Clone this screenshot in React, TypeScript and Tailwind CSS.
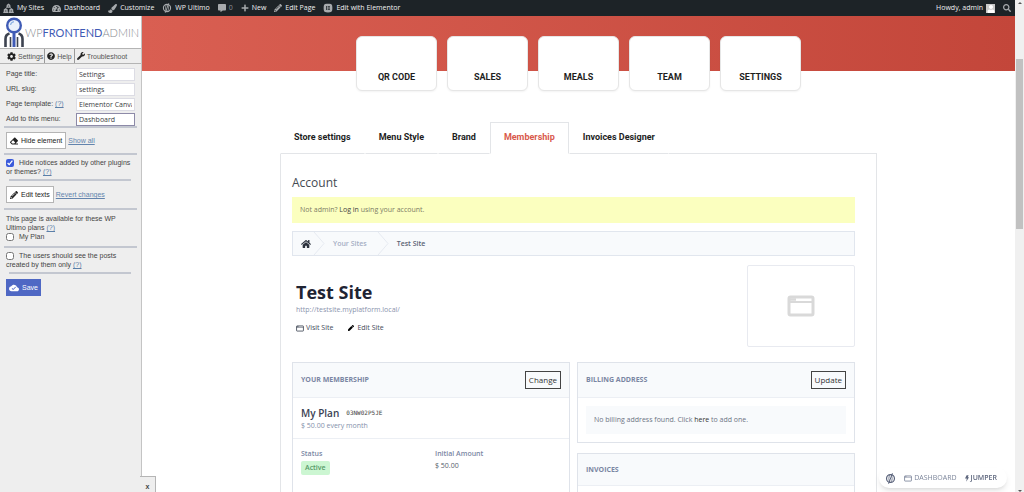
import type { ReactNode } from "react";
import {
  FaCog,
  FaCommentAlt,
  FaElementor,
  FaEraser,
  FaHome,
  FaPaintBrush,
  FaPen,
  FaPencilAlt,
  FaPlus,
  FaQuestionCircle,
  FaSearch,
  FaTachometerAlt,
  FaUser,
  FaWrench,
} from "react-icons/fa";
import { MdCloudDone } from "react-icons/md";

const SHORTCUTS = ["QR CODE", "SALES", "MEALS", "TEAM", "SETTINGS"];
const TABS = ["Store settings", "Menu Style", "Brand", "Membership", "Invoices Designer"];

function MultisiteIcon() {
  return (
    <svg viewBox="0 0 20 20" className="size-[11px]" fill="currentColor">
      <path d="M10 1l3.4 2.6V7h1v1.6H5.6V7h1V3.6zM5 9l3.6 2.8V16h1v2H.5v-2h.9v-4.2zM15 9l3.6 2.8V16h1v2h-9.100v-2h.9v-4.200z" />
      <path d="M9 4.500h2V7H9zM4 13h2v3H4zM14 13h2v3h-2z" fill="#1d2327" opacity="0.6" />
    </svg>
  );
}

function UltimoIcon({ className }: { className: string }) {
  return (
    <svg viewBox="0 0 20 20" className={className} fill="none" stroke="currentColor">
      <circle cx="10" cy="10" r="7.200" strokeWidth="2.200" />
      <ellipse cx="10" cy="10" rx="3" ry="7" strokeWidth="1.400" />
      <path d="M13.500 0.500L6.500 19.500" strokeWidth="1.800" />
    </svg>
  );
}

function WindowIcon({ className }: { className: string }) {
  return (
    <svg viewBox="0 0 28 22" className={className} fill="none" stroke="currentColor">
      <rect x="2" y="2" width="24" height="18" rx="1.500" strokeWidth="3" />
      <path d="M2 7h24" strokeWidth="2" />
      <path d="M3 4.500h6" strokeWidth="2.500" />
    </svg>
  );
}

function BrandMark() {
  return (
    <svg viewBox="0 0 20 30" className="h-[30px] w-5 shrink-0" fill="none">
      <path d="M1.500 30V22q0-4.500 4-5.500M18.500 30V22q0-4.500-4-5.500" stroke="#3d4350" strokeWidth="2.600" />
      <path d="M6.500 30V20M13.500 30V20" stroke="#3d4350" strokeWidth="1.600" />
      <path d="M10 15v15" stroke="#3f5bb5" strokeWidth="3" />
      <circle cx="10" cy="8.500" r="6.800" fill="#e9f0fb" stroke="#3f5bb5" strokeWidth="2.400" />
      <path d="M6.500 8q.6-3 3.500-3.400" stroke="#8fb4e4" strokeWidth="1.200" />
    </svg>
  );
}

function AdminItem({ icon, label, muted }: { icon: ReactNode; label: string; muted?: boolean }) {
  return (
    <a href="#" className={`flex items-center gap-[3px] whitespace-nowrap ${muted ? "text-[#8c9196]" : ""}`}>
      <span className="text-[#a7aaad]">{icon}</span>
      {label}
    </a>
  );
}

function AdminBar() {
  return (
    <header className="flex h-4 shrink-0 items-center gap-2 bg-[#1d2327] pr-1 pl-[3px] font-['Open_Sans','Noto_Sans',sans-serif] text-[7px] text-[#f0f0f1]">
      <AdminItem icon={<MultisiteIcon />} label="My Sites" />
      <AdminItem icon={<FaTachometerAlt className="size-[9px]" />} label="Dashboard" />
      <AdminItem icon={<FaPaintBrush className="size-[9px]" />} label="Customize" />
      <AdminItem icon={<UltimoIcon className="size-[10px]" />} label="WP Ultimo" />
      <AdminItem icon={<FaCommentAlt className="size-2" />} label="0" muted />
      <AdminItem icon={<FaPlus className="size-2" />} label="New" />
      <AdminItem icon={<FaPencilAlt className="size-2" />} label="Edit Page" />
      <AdminItem icon={<FaElementor className="size-[10px] rounded-full" />} label="Edit with Elementor" />
      <a href="#" className="ml-auto flex items-center gap-[3px]">
        Howdy, admin
        <span className="flex size-[9px] items-end justify-center bg-[#c9c9c9] text-white">
          <FaUser className="size-2" />
        </span>
      </a>
      <button aria-label="Search" className="text-[#a7aaad]">
        <FaSearch className="size-2" />
      </button>
    </header>
  );
}

function Hint() {
  return (
    <a href="#" className="text-[#5b7fa8] underline">
      (?)
    </a>
  );
}

const FIELD_CLASS =
  "h-[13px] w-full min-w-0 appearance-none border bg-white px-0.5 font-['Open_Sans','Noto_Sans',sans-serif] text-[7px] text-[#3c4043]";

function Field({
  id,
  label,
  value,
  options,
  hint,
  active,
}: {
  id: string;
  label: string;
  value: string;
  options?: string[];
  hint?: boolean;
  active?: boolean;
}) {
  const className = `${FIELD_CLASS} ${active ? "border-[#8d8aa8]" : "border-[#dcdce4]"}`;
  return (
    <div className="flex items-center">
      <span className="w-[70px] shrink-0 pb-0.5">
        <label htmlFor={id}>{label}</label> {hint && <Hint />}
      </span>
      {options ? (
        <select id={id} defaultValue={value} className={className}>
          {options.map((option) => (
            <option key={option}>{option}</option>
          ))}
        </select>
      ) : (
        <input id={id} defaultValue={value} className={className} />
      )}
    </div>
  );
}

function Divider({ inset }: { inset?: boolean }) {
  return <hr className={`border-t-2 border-[#c3c7d0] ${inset ? "mr-1 ml-[3px]" : "-mx-0.5"}`} />;
}

function PanelButton({ icon, label }: { icon: ReactNode; label: string }) {
  return (
    <button className="flex h-[17px] items-center gap-[3px] border border-[#b5b5b5] bg-white px-[3px] text-[#222]">
      {icon}
      {label}
    </button>
  );
}

function Sidebar() {
  return (
    <aside className="relative w-[142px] shrink-0 border-r border-[#c4c4c4] bg-[#eeeeee] font-['Liberation_Sans',Arial,sans-serif] text-[7px] leading-[9px] text-[#444]">
      <div className="flex h-8 items-center gap-px bg-white pl-1">
        <BrandMark />
        <span className="font-['Lato',sans-serif] text-[11px] font-light text-[#85888e]">
          WP<b className="text-[#3f5bb5]">FRONTEND</b>ADMIN
        </span>
      </div>
      <nav className="flex h-4 items-stretch border-y border-[#b4b4b4] pl-[7px] text-[#555]">
        <a href="#" className="flex items-center gap-0.5 border-r border-[#999] pr-px">
          <FaCog className="size-[9px] text-[#222]" />
          Settings
        </a>
        <a href="#" className="flex items-center gap-0.5 border-r border-[#999] px-0.5">
          <FaQuestionCircle className="size-2 text-[#222]" />
          Help
        </a>
        <a href="#" className="flex items-center gap-0.5 pl-0.5">
          <FaWrench className="size-2 text-[#222]" />
          Troubleshoot
        </a>
      </nav>
      <form className="px-1.5 pt-1" onSubmit={(e) => e.preventDefault()}>
        <div className="flex flex-col gap-0.5">
          <Field id="page-title" label="Page title:" value="Settings" />
          <Field id="url-slug" label="URL slug:" value="settings" />
          <Field id="page-template" label="Page template:" value="Elementor Canva" options={["Elementor Canva"]} hint />
          <Field id="menu" label="Add to this menu:" value="Dashboard" options={["Dashboard"]} active />
        </div>
        <Divider />
        <div className="flex items-center gap-0.5 py-1">
          <PanelButton icon={<FaEraser className="size-2" />} label="Hide element" />
          <a href="#" className="text-[#6384ad] underline">Show all</a>
        </div>
        <Divider />
        <div className="py-[3px]">
          <input id="notices" type="checkbox" defaultChecked className="mr-[5px] size-2 align-middle accent-[#3b5bdb]" />
          <label htmlFor="notices">
            Hide notices added by other plugins
            <br />
            or themes?
          </label>{" "}
          <Hint />
        </div>
        <Divider inset />
        <div className="flex items-center gap-0.5 py-[5px]">
          <PanelButton icon={<FaPencilAlt className="size-2" />} label="Edit texts" />
          <a href="#" className="text-[#6384ad] underline">Revert changes</a>
        </div>
        <Divider />
        <div className="pt-1 pb-[5px]">
          <p>
            This page is available for these WP
            <br />
            Ultimo plans <Hint />
          </p>
          <div className="flex items-center gap-[5px]">
            <input id="my-plan" type="checkbox" className="size-2" />
            <label htmlFor="my-plan">My Plan</label>
          </div>
        </div>
        <Divider />
        <div className="py-[3px]">
          <input id="own-posts" type="checkbox" className="mr-[5px] size-2 align-middle" />
          <label htmlFor="own-posts">
            The users should see the posts
            <br />
            created by them only
          </label>{" "}
          <Hint />
        </div>
        <Divider inset />
        <button className="mt-[5px] flex h-[17px] items-center gap-[3px] bg-[#4f68c4] px-[3px] text-white">
          <MdCloudDone className="size-[10px]" />
          Save
        </button>
      </form>
      {/* Collapse handle hanging off the panel edge */}
      <button className="absolute bottom-0 left-[140px] h-4 w-4 border-t border-r border-[#b5b5b5] bg-[#eeeeee] pt-1 font-bold">
        x
      </button>
    </aside>
  );
}

function CardHeader({ title, action }: { title: string; action?: string }) {
  return (
    <div className={`flex items-center justify-between border-b border-[#eceff4] bg-[#f8fafc] px-2 ${action ? "h-[35px]" : "h-8"}`}>
      <h3 className="text-[7px] font-bold text-[#7a86a3]">{title}</h3>
      {action && (
        <button className="h-[18px] border border-[#444] px-[3px] text-[8px] text-[#333]">{action}</button>
      )}
    </div>
  );
}

function MembershipCard() {
  return (
    <section className="border border-[#dfe3ea] bg-white">
      <CardHeader title="YOUR MEMBERSHIP" action="Change" />
      <div className="border-b border-[#eceff4] px-2 pt-2 pb-1.5">
        <div className="flex items-center gap-[7px] leading-[14px]">
          <span className="text-[10px] font-semibold text-[#3a4152]">My Plan</span>
          <code className="font-['DejaVu_Sans_Mono',monospace] text-[6px] text-[#444]">03NW02P5JE</code>
        </div>
        <p className="leading-3 text-[#8490ab]">$ 50.00 every month</p>
      </div>
      <div className="grid grid-cols-2 gap-2 px-2 pt-2.5 pb-[30px]">
        <div>
          <h4 className="mb-0.5 font-semibold text-[#7a86a3]">Status</h4>
          <span className="inline-block rounded-xs bg-[#ccf6d2] px-1 py-0.5 font-semibold text-[#569a68]">Active</span>
        </div>
        <div>
          <h4 className="mb-0.5 font-semibold text-[#7a86a3]">Initial Amount</h4>
          <span className="text-[#555c6c]">$ 50.00</span>
        </div>
      </div>
    </section>
  );
}

function Chevron() {
  return (
    <svg viewBox="0 0 12 23" className="mr-2 ml-0.5 h-[23px] w-3" fill="none" stroke="#e6eaf1">
      <path d="M1 0l10 11.500L1 23" />
    </svg>
  );
}

function AccountPanel() {
  return (
    <div className="border border-t-0 border-[#e3e5e8] pt-[21px] pr-[21px] pl-[11px] font-['Open_Sans','Noto_Sans',sans-serif] text-[7px] leading-[10px]">
      <h1 className="text-[12px] leading-4 text-[#444a52]">Account</h1>
      <p className="mt-[6px] bg-[#fbffbf] px-2 py-2 text-[#7c7c66]">
        Not admin? <a href="#" className="text-[#444]">Log in</a> using your account.
      </p>
      <nav className="mt-2 flex h-[25px] items-center border border-[#e1e6ee] bg-[#f8fafc] pl-2">
        <FaHome className="size-[10px] text-[#2c323d]" />
        <Chevron />
        <a href="#" className="mr-2 font-semibold text-[#a5aec4]">Your Sites</a>
        <Chevron />
        <span className="font-semibold text-[#5b6374]">Test Site</span>
      </nav>
      <div className="mt-[9px] flex items-start justify-between">
        <div className="pt-4 pl-1">
          <h2 className="text-[18px] leading-[22px] font-bold text-[#1f2433]">Test Site</h2>
          <p className="mt-0.5 text-[#8a93ad]">http://testsite.myplatform.local/</p>
          <div className="mt-2 flex gap-[15px] text-[#444b59]">
            <a href="#" className="flex items-center gap-0.5">
              <WindowIcon className="h-[7px] w-2" />
              Visit Site
            </a>
            <a href="#" className="flex items-center gap-[3px]">
              <FaPen className="size-[6px] text-black" />
              Edit Site
            </a>
          </div>
        </div>
        <div className="flex h-[82px] w-[108px] items-center justify-center rounded-xs border border-[#e8eaf0]">
          <WindowIcon className="h-[22px] w-7 text-[#d9d9d9]" />
        </div>
      </div>
      <div className="mt-[15px] grid grid-cols-2 items-start gap-[7px]">
        <MembershipCard />
        <div className="flex flex-col gap-2.5">
          <section className="border border-[#dfe3ea] bg-white">
            <CardHeader title="BILLING ADDRESS" action="Update" />
            <p className="m-2 bg-[#f8fafc] px-2 py-[9px] text-[#6d7484]">
              No billing address found. Click <a href="#" className="text-[#333]">here</a> to add one.
            </p>
          </section>
          <section className="border border-[#dfe3ea] bg-white">
            <CardHeader title="INVOICES" />
            <div className="h-10" />
          </section>
        </div>
      </div>
    </div>
  );
}

function Main() {
  return (
    <main className="min-w-0 flex-1 bg-white">
      <div className="h-[55px] bg-linear-to-r from-[#d95f52] to-[#c3463a] pt-5">
        <div className="flex justify-center gap-2.5 font-['Roboto',sans-serif] text-[9px] font-bold text-[#1e1e1e]">
          {SHORTCUTS.map((name) => (
            <a
              key={name}
              href="#"
              className="flex h-[55px] w-[81px] items-end justify-center rounded-md border border-[#e6e6e6] bg-white pb-1.5 shadow-xs"
            >
              {name}
            </a>
          ))}
        </div>
      </div>
      <div className="mx-auto mt-[51px] w-[69%] max-w-[597px] min-w-[520px]">
        <div role="tablist" className="flex font-['Roboto',sans-serif] text-[9px] font-bold text-[#1e1e1e]">
          {TABS.map((tab) => {
            const isActive = tab === "Membership";
            return (
              <button
                key={tab}
                role="tab"
                aria-selected={isActive}
                className={`h-8 border px-[13px] whitespace-nowrap ${
                  isActive
                    ? "border-[#e3e5e8] border-b-white text-[#d9594c]"
                    : "border-transparent border-b-[#e3e5e8]"
                }`}
              >
                {tab}
              </button>
            );
          })}
          <span className="flex-1 border-b border-[#e3e5e8]" />
        </div>
        <AccountPanel />
      </div>
    </main>
  );
}

export default function App() {
  return (
    <div className="flex h-screen overflow-hidden bg-white">
      <div className="flex min-w-0 flex-1 flex-col">
        <AdminBar />
        <div className="flex min-h-0 flex-1">
          <Sidebar />
          <Main />
        </div>
      </div>
      {/* Scroll track */}
      <div className="flex w-[9px] shrink-0 flex-col items-center bg-[#f0f0f0]">
        <span className="mt-0.5 border-x-2 border-b-2 border-x-transparent border-b-[#555]" />
        <span className="mt-[55px] h-[170px] w-[7px] bg-[#c1c1c1]" />
        <span className="mt-auto border-x-2 border-t-2 border-x-transparent border-t-[#555]" />
      </div>
      {/* Floating toolbar */}
      <div className="fixed right-[17px] bottom-1 flex h-5 items-center gap-2 rounded-full bg-white pr-2.5 pl-1.5 font-['Open_Sans','Noto_Sans',sans-serif] text-[7px] text-[#7d869b] shadow-md">
        <UltimoIcon className="size-[11px] text-[#59627a]" />
        <a href="#" className="flex items-center gap-0.5">
          <WindowIcon className="h-[7px] w-2" />
          DASHBOARD
        </a>
        <button className="flex items-center gap-0.5 font-semibold text-[#5d667d]">
          <svg viewBox="0 0 10 16" className="h-[7px] w-1" fill="currentColor">
            <path d="M4 0h5L7 5h3L3 16l1.500-8H0z" />
          </svg>
          JUMPER
        </button>
      </div>
    </div>
  );
}
